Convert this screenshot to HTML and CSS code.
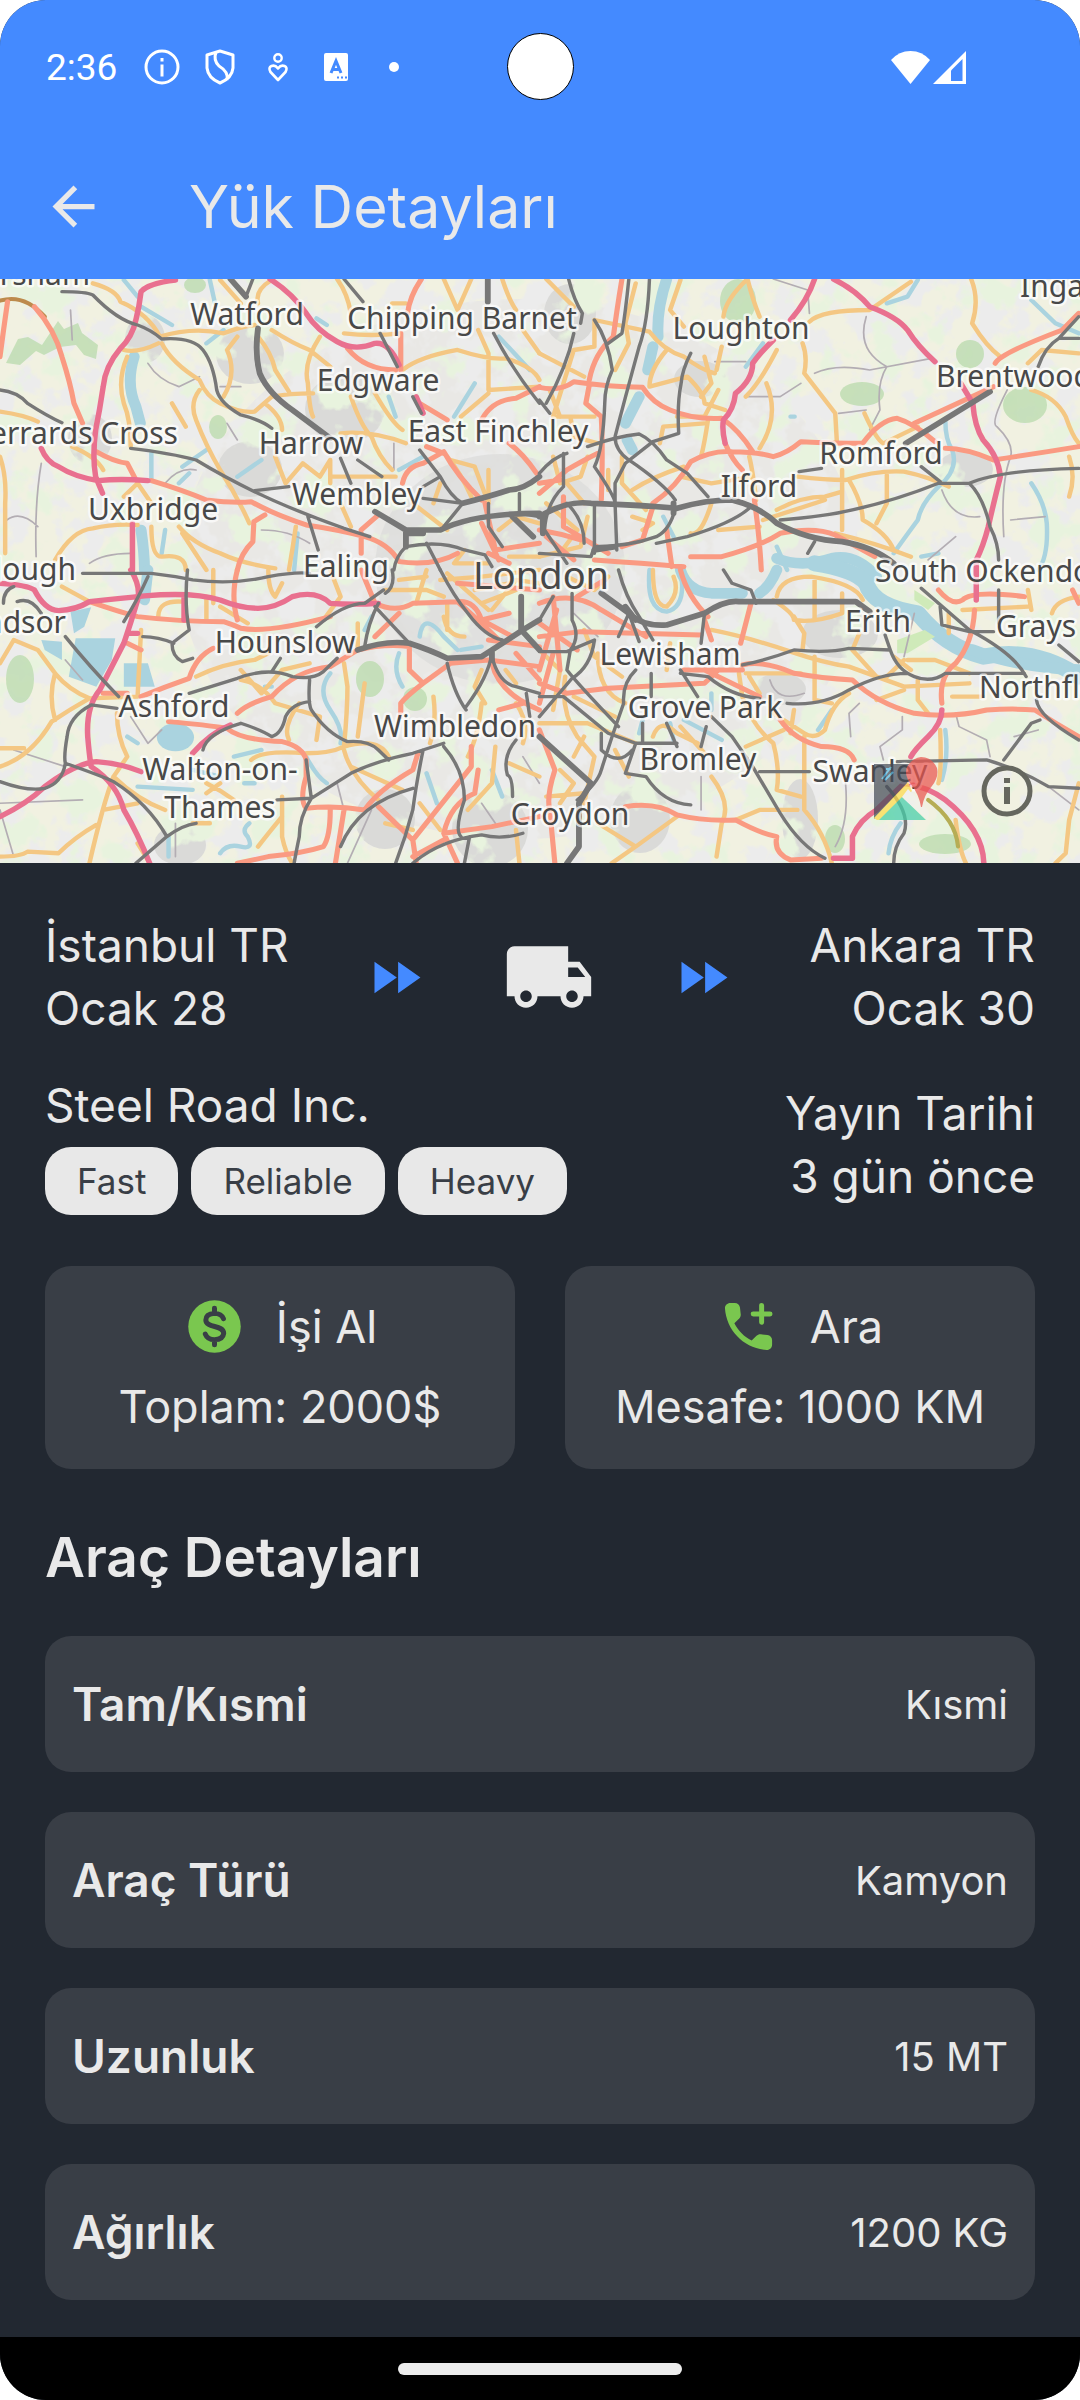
FILE: index.html
```html
<!DOCTYPE html>
<html lang="tr">
<head>
<meta charset="utf-8">
<meta name="viewport" content="width=device-width, initial-scale=1">
<title>Yük Detayları</title>
<link rel="stylesheet" href="styles.css">
</head>
<body>
<div class="phone">
  <header class="top">
    <div class="status">
      <time class="clock">2:36</time>
      <svg class="status-icon" viewBox="0 0 36 36" aria-hidden="true"><circle cx="18" cy="18" r="16" fill="none" stroke="#fff" stroke-width="3"/><path d="M16.500 9h3v3.500h-3zM16.500 15.500h3v12h-3z" fill="#fff"/></svg>
      <svg class="status-icon" viewBox="0 0 36 36" aria-hidden="true"><path d="M18 2 31 6V19Q30 29 18 34Q6 29 5 19V6ZM14 3.500Q11 11 17 17Q27 23 25 31" fill="none" stroke="#fff" stroke-width="3" stroke-linejoin="round"/></svg>
      <svg class="status-icon" viewBox="0 0 36 36" aria-hidden="true"><circle cx="18" cy="9" r="3.700" fill="none" stroke="#fff" stroke-width="2.400"/><path d="M18 31 10.500 23Q8 18.500 11.500 17Q15 15.500 18 19.500Q21 15.500 24.500 17Q28 18.500 25.500 23Z" fill="none" stroke="#fff" stroke-width="2.600" stroke-linejoin="round"/></svg>
      <svg class="status-icon" viewBox="0 0 36 36" aria-hidden="true"><rect x="6" y="4" width="24" height="28" rx="2" fill="#fff"/><path d="M13 24 18 12 23 24M14.500 20.500H21.500" fill="none" stroke="#448aff" stroke-width="3"/><path d="M19 27.500h2v2h-2zM23 27.500h2v2h-2zM27 27.500h2v2h-2z" fill="#448aff"/></svg>
      <svg class="status-icon" viewBox="0 0 36 36" aria-hidden="true"><circle cx="18" cy="18" r="5" fill="#fff"/></svg>
      <span class="camera"></span>
      <svg class="signal" viewBox="0 0 76 34" aria-hidden="true"><path d="M0 10Q8 1 19.500 1T39 10L19.500 34Z" fill="#fff"/><path d="M42 34 75 1V34Z" fill="#fff"/><path d="M60 20.500 71.500 9V31H60Z" fill="#448aff"/></svg>
    </div>
    <div class="appbar">
      <button class="back" type="button" aria-label="Geri"><svg viewBox="0 0 24 24"><path d="M20 11H7.830l5.590-5.590L12 4l-8 8 8 8 1.410-1.410L7.830 13H20v-2z" fill="currentColor"/></svg></button>
      <h1 class="title">Yük Detayları</h1>
    </div>
  </header>

  <div class="map">
    <svg class="map-canvas" viewBox="0 0 1080 584" preserveAspectRatio="xMidYMid slice" role="img" aria-label="Harita">
      <defs>
        <filter id="woods" x="0" y="0" width="1" height="1">
          <feTurbulence type="fractalNoise" baseFrequency=".03" numOctaves="4" seed="8"/>
          <feColorMatrix values="0 0 0 0 .81  0 0 0 0 .9  0 0 0 0 .73  9 0 0 0 -4.900"/>
        </filter>
        <filter id="streets" x="0" y="0" width="1" height="1">
          <feTurbulence type="fractalNoise" baseFrequency=".035" numOctaves="4" seed="21"/>
          <feColorMatrix values="0 0 0 0 .84  0 0 0 0 .84  0 0 0 0 .835  0 9 0 0 -4.200"/>
        </filter>
      </defs>
      <rect width="1080" height="584" fill="#f1f1e1"/>
      <ellipse cx="520" cy="290" rx="340" ry="270" fill="#e9e8e5"/>
      <rect width="1080" height="584" filter="url(#streets)"/>
      <g fill="#dadad8">
        <ellipse cx="500" cy="290" rx="125" ry="115" opacity=".65"/>
        <ellipse cx="145" cy="60" rx="20" ry="24"/><ellipse cx="250" cy="75" rx="34" ry="30"/><ellipse cx="345" cy="130" rx="40" ry="34"/>
        <ellipse cx="250" cy="190" rx="32" ry="28"/><ellipse cx="90" cy="160" rx="22" ry="25"/><ellipse cx="570" cy="35" rx="26" ry="30"/>
        <ellipse cx="965" cy="190" rx="28" ry="18"/><ellipse cx="840" cy="355" rx="38" ry="24"/><ellipse cx="800" cy="540" rx="18" ry="40"/>
        <ellipse cx="180" cy="566" rx="26" ry="20"/><ellipse cx="490" cy="550" rx="38" ry="38"/><ellipse cx="385" cy="540" rx="30" ry="30"/>
        <ellipse cx="780" cy="410" rx="26" ry="16"/><ellipse cx="640" cy="540" rx="30" ry="34"/><ellipse cx="700" cy="100" rx="26" ry="18"/>
      </g>
      <rect width="1080" height="584" filter="url(#woods)"/>
      <g fill="#bddcb0" opacity=".8">
        <ellipse cx="738" cy="22" rx="18" ry="22"/><ellipse cx="1025" cy="126" rx="22" ry="18"/><ellipse cx="862" cy="115" rx="22" ry="12"/>
        <path d="M6 84 18 60 28 58 42 66 58 42 64 50 78 44 82 54 98 66 96 80 84 76 76 66 60 68 44 76 36 72 20 86Z"/>
        <ellipse cx="218" cy="148" rx="9" ry="12"/><ellipse cx="20" cy="400" rx="14" ry="24"/><ellipse cx="415" cy="420" rx="12" ry="12"/><ellipse cx="195" cy="6" rx="11" ry="8"/>
        <ellipse cx="970" cy="75" rx="14" ry="14"/><ellipse cx="835" cy="560" rx="10" ry="14"/><ellipse cx="945" cy="565" rx="26" ry="10"/><ellipse cx="370" cy="400" rx="14" ry="18"/>
      </g>
      <g fill="none" stroke-linecap="round" stroke-linejoin="round" transform="scale(.344 .3333)">
        <g stroke="#aad3df" fill="none">
          <g stroke-width="13">
            <path transform="translate(0 -27)" d="M410 110 500 165M360 30 400 80M610 30 625 100M440 550V630M600 220 650 180M690 620 760 570M530 590 600 540M1320 440 1380 340M1130 380 1150 440M1450 200 1540 300M520 640 550 610M920 145 950 165M1160 600 1230 560M480 780 470 850M865 790 855 900"/>
            <path transform="translate(1568 -27)" d="M650 220 600 290M1010 100 1070 80 1100 30M1430 90 1500 160 1568 190M1180 450Q1180 510 1200 540 1220 600 1160 650 1110 700 1100 750 1050 820 1030 850M1430 640Q1470 700 1475 760 1480 860 1450 900M730 440h12M360 740 390 800M690 830 720 900M1110 860 1160 850"/>
            <path transform="translate(0 873)" d="M960 310Q920 360 960 420 1000 480 990 520M680 560 760 540M640 850Q660 820 700 830 740 840 720 800 700 780 725 760M1160 250Q1140 300 1170 350M1220 200Q1230 120 1290 200L1330 240M890 560Q920 620 950 640M1430 600 1460 680M1240 610 1270 700M490 800V860M560 600 640 620M370 500 400 520M710 640 740 640M1340 240 1400 230M1060 180 1080 140M770 350 790 350M400 650 560 660"/>
            <path transform="translate(1568 873)" d="M810 480 850 420M420 450 530 510M1050 760Q1020 800 1015 850M290 490 300 450M390 510 380 460M1180 480Q1190 560 1170 630M500 370V420M320 0Q310 120 370 125 430 110 410 0"/>
          </g>
          <g stroke-width="32">
            <path transform="translate(0 -27)" d="M390 260Q365 340 395 410L408 460M410 780Q420 850 420 900"/>
            <path transform="translate(1568 -27)" d="M370 27Q340 120 345 200M330 230 315 300M290 380 250 460M255 510 270 540M690 865Q760 895 850 865 920 850 980 920"/>
            <path transform="translate(0 873)" d="M430 0 420 90"/>
            <path transform="translate(1568 873)" d="M410 0Q430 65 500 70H590M690 0Q670 50 640 70"/>
          </g>
          <path transform="translate(1568 873)" stroke-width="48" d="M800-20Q920 0 950 40 970 110 1100 130 1180 230 1290 260 1440 230 1568 320"/>
          <path transform="translate(1568 873)" stroke-width="34" d="M1260 240Q1380 290 1568 300"/>
        </g>
        <g transform="translate(0 873)" fill="#aad3df"><ellipse cx="510" cy="502" rx="54" ry="42"/><path d="M205 125 265 112 245 170 215 190ZM220 205H335L325 270 280 350 200 320ZM360 280H430L450 350H360ZM120 210 180 215 180 270 130 240Z"/></g>
        <g fill="#cfeab9" transform="translate(1568 873)"><path d="M1090 60 1150 100 1130 120 1090 90ZM1040 210 1120 180 1150 200 1070 250 1040 250Z"/></g>

        <g stroke="#b3adb3" stroke-width="5">
          <path transform="translate(0 -27)" d="M205 120 210 210M660 460 690 510M120 580Q100 700 105 860M20 750Q60 720 110 770M260 880Q300 850 380 850M430 280Q460 330 520 350L580 320M640 350 700 350M480 640Q520 590 570 600M1145 520V600M760 780Q840 780 900 820"/>
          <path transform="translate(1568 -27)" d="M950 140Q920 240 1010 290 980 340 990 420L960 480M870 430 950 420M1360 360Q1310 460 1330 470 1380 520 1370 560 1340 640 1350 800M800 310Q860 280 960 300L1140 265M600 380H700L760 340M1170 660Q1200 750 1280 740M1370 750 1470 740M680 27 780 60 785 130M510 275H600M1130 870 1210 800"/>
          <path transform="translate(0 873)" d="M40 540 190 590M0 700 240 690M190 270 240 330M380 440 430 520 470 480M0 720 40 860M510 760V860M1520 560 1568 640M1080 720 1010 880M1400 700 1440 760M980 640 1000 720"/>
          <path transform="translate(1568 873)" d="M1055 440V480L990 530 1000 570M1210 430 1220 470 1300 510 1310 560M890 640Q900 760 860 830M930 400 900 430 905 500M1380 500 1450 480M1480 650 1568 720M670 330Q690 400 770 370M470 620V720M100 130 170 200M1090 130 1060 260"/>
        </g>

        <g stroke="#f4c783" stroke-width="13">
          <path transform="translate(0 -27)" d="M270 40Q340 60 350 95 430 130 465 200 560 170 650 190 700 170 740 165M0 425Q70 435 110 455M0 560Q20 620 15 700V850M360 240Q400 250 460 220M370 260Q340 330 360 400 380 450 380 530M470 220Q500 280 580 330 600 380 640 400 700 430 740 425L790 380Q840 370 910 370M690 200 660 240Q690 310 650 380M580 360Q550 400 570 450 600 530 640 600 690 680 725 760M750 200Q790 250 800 300L840 365M790 180Q850 220 900 240L960 290M930 200Q880 280 895 340 900 420 910 440M770 400Q820 440 820 480M1020 380Q1050 470 1080 500 1100 560 1140 600M1090 370Q1140 460 1170 480M1000 190Q1080 200 1165 190M1170 300Q1220 260 1330 240 1420 270 1470 265 1550 290 1568 330M1390 180 1420 250V360L1568 350M1420 370 1340 440M990 490Q1080 480 1180 520M640 30 700 100M980 27Q1010 70 1020 130M1290 27 1330 120 1370 27M1460 27Q1480 90 1500 120M1520 180 1568 250M800 560 830 640 880 580 930 620 960 570V640M960 620H1150M1310 570 1380 590 1420 700M160 870Q210 780 270 775 330 760 400 765M440 770Q440 860 470 860 540 850 540 900M520 770Q560 820 640 850 700 880 800 895M530 790 600 900M860 770Q850 840 840 900M990 700 1020 770M1200 700 1300 780M750 100Q740 60 790 30M210 530Q280 560 300 600M360 680 400 640 440 700M540 470 500 400M1140 100H1180M1280 640 1260 700M1300 560Q1340 610 1370 680M1450 780 1500 740 1568 760M1420 600V700M1350 840 1320 880 1420 880M1480 860 1568 860"/>
          <path transform="translate(1568 -27)" d="M20 27Q80 90 100 110M0 250 130 320M160 150V230L100 240 40 440H160M160 150 320 185Q360 240 420 260 470 300 510 310M370 240Q320 300 320 350L430 320Q480 370 480 400L540 420M410 30 380 120 420 170M535 140Q540 90 605 27 620 90 640 140M785 155Q820 120 960 120L1080 35M515 300 530 230M690 240Q640 340 600 380M765 220Q780 260 770 310 800 350 860 430L865 520M660 340Q700 440 640 535M1255 27Q1280 90 1258 160 1300 230 1340 260M1420 280 1460 240 1568 250M1430 360Q1500 380 1530 440 1550 500 1568 520M945 430Q980 510 1000 520L1100 470M610 560Q620 600 630 690M750 620Q830 630 890 630 980 600 1060 605 1130 620 1190 650M880 600V780M900 630Q940 700 940 750 1010 790 1030 840M690 720Q760 680 830 680L880 665M650 750 830 690M1010 615V700L980 760M860 790Q980 820 1080 860M270 660Q330 620 420 590M490 450Q480 520 470 560M350 520 360 470 480 460M500 700Q470 800 440 790M520 780 640 770M280 40 250 160 260 220 220 300M400 440 480 440 520 360M30 360 60 440M40 560 60 640 120 620 140 560M240 560V640L310 720M270 740 330 760 300 780M1540 560Q1560 620 1540 680M410 620 500 640 620 620M480 260 500 340 470 380M0 860 120 830 140 740M20 700 110 780 60 850M200 600V660M90 440 100 500 170 520M80 640 130 700"/>
          <path transform="translate(0 873)" d="M0 280 40 210 110 240 160 310Q200 360 260 385L400 380 410 180M260 385Q200 420 150 455 90 560 0 590M160 310Q140 380 160 450M0 535H70M340 430Q340 500 370 560L330 620Q300 700 260 880M300 720 400 700M0 860Q60 860 80 845L170 850Q220 800 280 765M330 620Q400 690 480 720M180 50 260 95M460 140Q460 90 530 95M600 80V150M620 100V0M640 110 720 160M780 0Q780 60 800 80L820 40M570 320Q650 280 740 270L780 250M700 300 760 370 820 300 900 280M700 330Q760 340 800 400L930 440 920 510M870 400Q820 470 840 510M730 570Q760 540 890 550 960 550 1000 530 1010 420 1010 350L1000 280M1000 530Q1100 500 1130 560M1020 590 1170 660M1000 540Q1020 620 1100 690M820 680V800Q830 850 850 880M820 740Q780 790 750 830M600 640Q640 660 680 690M600 670 640 640M560 760H610M940 150 990 80 960 0M1040 160V240M1210 100 1240 0M1290 140Q1300 200 1350 200M1280 30 1400 20 1568 0M1400 400Q1390 500 1360 560M1480 580 1568 620M1440 530 1430 640 1360 720M1220 700 1280 780M1500 780 1510 880M400 820 430 870M1400 100 1500 60M1380 60 1480 40M1300 10 1420 120M1260 380Q1270 460 1250 520M1120 60 1240 60 1290 80M1430 120 1500 30 1568 40M1300 100V180M1160 30 1240 20M1500 400Q1540 460 1520 520M1400 300 1380 350 1410 400M1060 340 1040 500M1120 760 1200 780M1470 300 1500 340"/>
          <path transform="translate(1568 873)" d="M690 80Q700 20 790 20 920 40 940 90M680 90Q740 130 740 150 800 160 880 130L880 70M800 30V150M500 180Q600 200 730 245 830 280 900 290L980 320 1060 350 1250 340M740 140 770 190 765 240M330 0Q330 110 370 110 410 70 390 20M1070 270H1150L1250 310M930 190 910 240 980 320M1100 330V390L1130 430M1165 480Q1170 600 1160 640M900 370Q850 400 830 480 800 510 770 490L680 430M580 310 590 380Q620 470 680 520 700 600 690 660L760 680M600 530 710 480M770 500V720Q830 790 850 880M500 620Q560 700 530 760L515 860M570 750 640 720H750M400 740 280 830 170 760M280 830 210 880M0 460 140 460 280 520M75 320Q60 420 110 500L160 560 130 700M330 500Q350 440 400 490L460 520M410 470 480 550M170 250Q170 370 250 400M1500 880 1530 850 1540 750 1568 640M1420 60 1430 120M1490 130Q1500 90 1568 80M1230 120 1420 110M1200 380H1290M1210 750Q1220 840 1240 880M1030 260 1080 300M800 260V390L850 400M600 310H760M610 320 640 370M980 390 1060 360M130 180 160 260 240 320M380 220 370 300M60 600 100 640 60 700M130 500 100 560M20 680 130 670M220 540 260 620M0 240 60 300 40 420M100 380 220 440M80 20 160 60 200 20M1060 270 1010 320M1190 130 1190 190M740 420 730 490"/>
        </g>
        <path transform="translate(1568 873)" stroke="#b6ad55" stroke-width="12" d="M1130 690Q1210 750 1217 830"/>
        <path transform="translate(0 -27)" stroke="#bd8a4c" stroke-width="12" d="M0 92Q70 70 130 140"/>

        <g stroke="#fa9a82" stroke-width="15">
          <path transform="translate(0 -27)" d="M22 95Q10 180 0 260M100 110Q160 180 180 260 205 340 215 400L240 460M280 545Q330 575 370 580L395 630M440 632Q530 660 600 690 680 700 730 695 790 730 890 765 990 780 1060 800 1130 820 1160 875 1260 890 1330 850M690 900Q700 850 735 815L738 755 770 735M1165 190V300M1185 130Q1190 80 1225 27M1010 235Q1060 300 1150 300M1220 400 1300 450M1400 450Q1430 390 1500 385L1568 350M1170 640Q1180 590 1230 580L1290 545Q1330 620 1400 690M1050 780 1100 735M1240 530 1290 550M1480 520Q1520 550 1560 610M1410 700 1440 840 1568 820M1050 790V850M1420 850 1480 880M1400 760 1450 870"/>
          <path transform="translate(1568 -27)" d="M240 27Q225 120 215 200 160 250 145 330M0 352Q60 365 100 335 200 350 300 352 330 400 380 420 450 450 530 445 580 480 620 545M145 345 135 400 180 440Q185 540 180 690M330 700Q400 650 440 575 500 540 560 545 630 545 680 560 720 550 760 515 860 520 940 520 990 450 1040 445 1090 460 1150 515M1180 535Q1240 535 1320 570 1450 550 1568 530M1090 460 1320 350M1325 280Q1340 250 1520 180L1568 130M540 520Q560 570 590 600M625 690Q640 800 645 900M440 860H530Q640 830 700 790 800 770 860 795L975 860M0 670 80 600Q130 570 170 550M70 680V770L200 850M0 780Q60 790 120 810M160 870Q300 880 420 890M370 780 385 890M240 830 300 810 330 710M0 640 60 630M20 800 100 870"/>
          <path transform="translate(0 873)" d="M260 95Q360 130 400 140 520 155 650 155 680 165 700 175 780 190 960 140M690 0Q670 80 690 150M370 220 410 240M410 380Q480 350 550 325 570 260 620 235M300 370H370M490 455Q600 465 660 475 700 510 820 515 880 530 890 570V620Q870 690 890 715 970 705 1060 720 1100 660 1200 600L1215 550M690 430Q720 400 790 380 860 300 960 290L1040 240Q1120 220 1190 230V300L1230 340Q1180 380 1165 400V440M1230 340 1310 280 1420 270 1568 290M1050 0 1090 100Q1150 130 1200 100L1330 95Q1380 90 1400 150L1480 130M960 720Q960 800 940 830 880 850 780 860L690 880M1000 720 975 880M1100 710 1200 810 1210 880M1200 810 1370 590V530M1390 600 1380 670Q1310 700 1290 790L1330 880M1290 790 1430 770 1568 740M1430 280Q1450 370 1568 420M1090 200 1160 130M1200 860 1290 810M1330 95Q1400 160 1450 210M1330 40 1568 60M1500 250 1568 330M1520 400 1450 420M1420 210 1568 230M1400 150 1490 200"/>
          <path transform="translate(1568 873)" d="M1160 60Q1200 110 1230 90 1260 60 1410 80M1265 120Q1260 220 1210 280 1160 320 1170 400M1568 100 1550 60M480 150 500 210M615 100 585 220M410 0Q430 80 490 140M590 285Q650 270 740 310 820 325 910 330 980 400 1090 430 1200 445 1300 420 1380 415 1440 420 1500 460 1568 500M700 450Q740 510 820 530 900 530 915 570M250 710Q340 695 400 735 480 755 570 750 640 790 690 800 680 850 730 870L820 865M0 340 80 370 200 355 480 340 520 300M0 480 45 600Q20 680 30 720L45 880M0 200 120 185 470 195M0 100Q100 60 180 120L310 200M40 80 60 300M0 300 50 120M110 80 190 30M420 300H590M480 300 640 380M0 160 110 240M0 400 40 250"/>
        </g>

        <g stroke="#e9708f" stroke-width="16">
          <path transform="translate(0 -27)" d="M510 30Q430 40 410 65 405 110 395 150 385 200 350 235 305 290 300 350 290 420 278 480 268 560 278 620L298 670M385 760V900M120 535Q135 575 170 590 215 620 285 632 350 625 430 632M785 27Q850 70 890 130 920 180 980 215 1030 245 1090 220 1130 215 1160 285M1210 380 1230 430"/>
          <path transform="translate(1568 -27)" d="M800 27Q780 90 730 150M680 210Q640 250 620 280 620 330 570 370 565 420 535 450 530 480 540 520M855 27Q920 60 960 110 1040 140 1070 180 1100 230 1150 275M1225 340 1260 400Q1265 470 1290 510 1335 560 1340 620 1320 700 1305 770 1290 830 1270 870V990"/>
          <path transform="translate(0 873)" d="M0 40Q80 45 100 60 130 120 170 122 220 120 260 95 360 85 420 78 560 65 640 90 700 115 750 115 800 115 850 80 920 60 960 100 1030 105 1100 100M380 0Q410 50 400 90 380 160 360 220 320 300 290 360 250 410 255 500 260 560 265 590 340 640 360 720 400 790 435 880M0 740Q80 700 130 650 220 580 280 575 350 580 410 605M535 80V150M560 550Q610 490 670 465M370 190H400"/>
          <path transform="translate(1568 873)" d="M1170 420Q1170 460 1130 500 1090 540 1080 560M855 865H910V800Q930 750 980 720L1060 640Q1130 650 1180 690 1290 780 1292 880"/>
        </g>

        <g stroke="#777" stroke-width="10">
          <path transform="translate(0 -27)" d="M180 65Q250 65 270 75 340 150 400 165 440 180 470 207 560 200 590 240 620 280 630 360 640 400 700 435 760 450 790 475M0 360Q50 365 80 400 140 440 180 458M380 535Q500 550 570 570 650 620 740 665 850 720 1000 775L1075 800M740 662 840 650M735 27 715 80M1000 27 1055 95M1105 190 1155 290M1200 380 1225 430M1435 190Q1490 300 1568 400M990 565 1020 640M1040 570 1110 620M1220 540 1280 620Q1310 680 1345 700M1280 620 1230 650M1230 685 1345 700 1290 770M1180 830Q1150 860 1145 900M1180 830Q1280 810 1350 840L1410 855 1430 890M1420 700V770L1460 830M1240 820 1280 900M895 740 925 840M1510 670V730L1568 740"/>
          <path transform="translate(1568 -27)" d="M85 27Q100 90 125 130L120 160M100 190Q80 290 20 400M260 27Q250 130 240 190L200 220M320 27Q315 160 290 230 250 380 220 500 220 540 260 570 360 640 395 690M160 150Q200 210 212 300 190 350 190 400 185 540 160 590 220 680 220 700L225 840M440 250Q415 300 412 340 400 400 405 490L330 515M140 530Q220 500 290 492 330 510 370 570L430 610 490 680M330 515 250 580 220 640V700M0 390 30 430M0 610Q40 560 80 550M70 550V650Q20 700 15 780L80 880M700 750Q830 740 910 720 1040 690 1160 640L1250 640Q1340 600 1568 595M1110 590 1165 635M755 605 820 595M1250 640Q1290 680 1310 770 1335 820 1335 870M1450 290Q1470 230 1510 205H1568M1510 205 1568 140M395 715Q380 780 340 800 260 830 160 830L150 860 0 850M340 820 430 800Q560 760 610 715M160 700V850M80 700Q130 750 130 820M800 815 780 850"/>
          <path transform="translate(0 873)" d="M240 10H440Q520 20 560 30 680 45 780 20 860 5 900 10M50 95Q90 80 120 130M10 100Q10 60 40 50M190 200Q260 290 345 380M340 415 265 405Q200 440 195 500 185 560 190 580 180 640 130 655 80 665 0 635M190 580Q300 620 330 635 430 700 485 800L395 880M485 800Q530 765 570 760M545 0Q535 100 550 180L500 220Q500 260 530 275L560 265M415 200Q460 200 505 220M430 20Q400 90 360 155M550 370 690 325Q780 290 850 320 910 330 940 305L980 265M790 305 815 265M900 330Q895 400 905 420 950 490 1010 515 1070 510 1100 540L1130 570M590 540Q600 490 700 460 760 480 790 500 820 490 830 440 850 400 900 395M805 690 905 685 1020 610Q1100 570 1200 550L1290 520M905 685 890 570M905 685Q870 740 870 800 860 850 855 880M920 170Q1000 100 1060 100L1115 60M1060 230Q1070 160 1100 100M1090 110 1190 220M1280 0Q1320 80 1360 130 1410 200 1460 210M1430 250Q1420 320 1355 410M1300 280Q1320 370 1355 420M1430 260Q1450 340 1500 350L1568 370M1530 370 1540 440M1230 540Q1210 640 1200 720 1180 800 1150 880M990 830Q1040 700 1200 655M1290 530Q1350 600 1350 690 1320 780 1340 800M1200 880Q1280 810 1400 795 1460 810 1520 790M1500 510Q1460 560 1475 615 1490 620 1490 680M1365 800 1350 880M1140 0Q1150 50 1120 70"/>
          <path transform="translate(1568 873)" d="M40 80 0 150M95 70V150Q120 200 90 240L80 300Q110 340 230 470M230 0Q250 80 290 140L330 210M260 130 290 215M260 130 230 200M480 130 470 220M535 0 560 40 615 60 630 100M0 245H80L160 210Q150 290 95 325L0 440M280 300Q240 340 245 400 210 500 180 600 170 640 110 690M325 310V380M410 300 460 380M410 310 490 320Q560 380 640 385M590 285Q660 270 740 240 840 250 900 235L1020 240Q1040 300 1090 320 1140 340 1180 310H1410M1020 240 1005 195M720 400Q820 410 900 360 990 310 1070 310M500 440 560 500 620 590 700 730Q760 830 830 865M640 605H785M1110 55 1250 180Q1380 250 1415 320M1165 110 1170 165 1250 185H1320M1510 225 1568 275M1445 390Q1450 440 1568 510M1455 450 1430 460 1350 570M1040 575 1300 570Q1400 600 1480 650L1568 655M0 380H70L200 490 280 520H400M280 520 250 610 310 620Q360 700 440 705M370 460 400 530M300 460V520M485 470 470 530M180 490V540Q230 590 270 540M1010 650Q1080 730 1060 790 1030 830 1030 880M1335 60V160"/>
        </g>
        <g stroke="#777" stroke-width="17">
          <path transform="translate(0 -27)" d="M670 27 715 80M750 175Q740 250 755 310 780 370 850 420L960 505M1418 27V95M1345 700Q1420 680 1480 660 1520 660 1568 620M1090 725 1180 780H1280Q1380 730 1568 730M1180 780V830M1490 740 1550 800M1180 790H1230"/>
          <path transform="translate(1568 -27)" d="M0 740Q80 690 150 700 300 705 400 715 480 690 560 690 640 710 690 760 780 810 880 815 970 830 1030 880M1065 520 1310 365M160 840 220 830M10 740V790M390 700V730"/>
          <path transform="translate(0 873)" d="M1040 240Q1120 210 1190 220 1250 240 1300 265L1400 260 1520 180 1568 150M1515 80V180L1568 240M1430 270V240"/>
          <path transform="translate(1568 873)" d="M180 70 260 130Q300 170 370 165L480 130Q540 90 580 95L920 95 960 125M250 110 280 150M0 500 150 640 115 700V830L80 880"/>
        </g>
      </g>
      <g class="map-labels">
        <text x="90" y="6" text-anchor="end">Amersham</text><text x="247" y="46">Watford</text><text x="462" y="50">Chipping Barnet</text>
        <text x="741" y="60">Loughton</text><text x="1020" y="18" text-anchor="start">Ingatestone</text><text x="378" y="112">Edgware</text>
        <text x="936" y="108" text-anchor="start">Brentwood</text><text x="178" y="165" text-anchor="end">Gerrards Cross</text><text x="311" y="175">Harrow</text>
        <text x="498" y="163">East Finchley</text><text x="881" y="185">Romford</text><text x="357" y="226">Wembley</text><text x="759" y="218">Ilford</text>
        <text x="153" y="241">Uxbridge</text><text x="76" y="301" text-anchor="end">Slough</text><text x="346" y="298">Ealing</text>
        <text class="city" x="541" y="310">London</text><text x="875" y="303" text-anchor="start">South Ockendon</text><text x="66" y="354" text-anchor="end">Windsor</text>
        <text x="285" y="374">Hounslow</text><text x="878" y="353">Erith</text><text x="1036" y="358">Grays</text><text x="670" y="386">Lewisham</text>
        <text x="979" y="419" text-anchor="start">Northfleet</text><text x="174" y="438">Ashford</text><text x="455" y="458">Wimbledon</text>
        <text x="705" y="439">Grove Park</text><text x="698" y="491">Bromley</text><text x="870" y="503">Swanley</text><text x="220" y="501">Walton-on-</text>
        <text x="220" y="539">Thames</text><text x="570" y="546">Croydon</text>
      </g>
    </svg>
    <svg class="map-logo" viewBox="0 0 64 64" aria-hidden="true">
      <g opacity=".72"><path d="M0 7H36L33 28 0 62Z" fill="#454c58"/><path d="M8 22 17 10M11 23 19 15M12 12H17" stroke="#55b9e0" stroke-width="2"/><path d="M0 61 34 25 38 34 8 63H3Z" fill="#ffdc4a"/><path d="M28 40 52 63H5Z" fill="#45cfa8"/><path d="M34 32 55 55 54 63 28 40Z" fill="#f1f1ec"/><path d="M47 50Q45 37 36 26Q30 17 33 10Q38 1 47 0Q58 0 63 11Q65 20 58 29Q50 38 48 50Z" fill="#e9564f"/></g>
    </svg>
    <button class="map-info" type="button" aria-label="Harita bilgisi"><svg viewBox="0 0 52 52"><circle cx="26" cy="26" r="23" fill="none" stroke="#66675f" stroke-width="5"/><path d="M23 13h6v5h-6zM23 22h6v17h-6z" fill="#66675f"/></svg></button>
  </div>

  <main class="content">
    <section class="route">
      <p>İstanbul TR<br>Ocak 28</p>
      <svg class="forward" viewBox="0 0 24 24" aria-hidden="true"><path d="M4 18l8.500-6L4 6v12zm9-12v12l8.500-6L13 6z" fill="#448aff"/></svg>
      <svg class="truck" viewBox="0 0 24 24" aria-hidden="true"><path d="M20 8h-3V4H3c-1.100 0-2 .9-2 2v11h2c0 1.660 1.340 3 3 3s3-1.340 3-3h6c0 1.660 1.340 3 3 3s3-1.340 3-3h2v-5l-3-4zM6 18.500c-.83 0-1.500-.67-1.500-1.500s.67-1.500 1.500-1.500 1.500.67 1.500 1.500-.67 1.500-1.500 1.500zm13.500-9l1.960 2.500H17V9.500h2.500zm-1.500 9c-.83 0-1.500-.67-1.500-1.500s.67-1.500 1.500-1.500 1.500.67 1.500 1.500-.67 1.500-1.500 1.500z" fill="currentColor"/></svg>
      <svg class="forward" viewBox="0 0 24 24" aria-hidden="true"><path d="M4 18l8.500-6L4 6v12zm9-12v12l8.500-6L13 6z" fill="#448aff"/></svg>
      <p class="end">Ankara TR<br>Ocak 30</p>
    </section>

    <section class="company">
      <div>
        <p>Steel Road Inc.</p>
        <ul class="chips"><li>Fast</li><li>Reliable</li><li>Heavy</li></ul>
      </div>
      <p class="end">Yayın Tarihi<br>3 gün önce</p>
    </section>

    <section class="actions">
      <button class="action" type="button">
        <span class="action-head"><svg viewBox="0 0 24 24" aria-hidden="true"><circle cx="12" cy="12" r="10" fill="#7ac74f"/><path d="M12 5V7M12 17V19M15.400 9Q14.600 7 12 7Q8.700 7.200 8.700 9.500C8.700 12.800 15.500 11.200 15.500 14.600Q15.200 17 12 17Q9.300 17 8.500 14.900" fill="none" stroke="#393e46" stroke-width="1.900" stroke-linecap="round"/></svg>İşi Al</span>
        <span>Toplam: 2000$</span>
      </button>
      <button class="action" type="button">
        <span class="action-head"><svg viewBox="0 0 24 24" aria-hidden="true"><path d="M19.230 15.260l-2.540-.29c-.61-.07-1.210.14-1.640.57l-1.840 1.840c-2.830-1.440-5.150-3.750-6.590-6.590l1.850-1.850c.43-.43.64-1.030.57-1.640l-.29-2.520c-.12-1.010-.97-1.770-1.990-1.770H5.030c-1.130 0-2.070.94-2 2.070.53 8.540 7.360 15.360 15.890 15.890 1.130.07 2.070-.87 2.070-2v-1.730c.01-1.010-.75-1.860-1.760-1.980z" fill="#7ac74f"/><path d="M17 4V10.400M13.800 7.200H20.200" stroke="#7ac74f" stroke-width="1.900" stroke-linecap="round"/></svg>Ara</span>
        <span>Mesafe: 1000 KM</span>
      </button>
    </section>

    <h2 class="heading">Araç Detayları</h2>
    <dl class="details">
      <div class="detail"><dt>Tam/Kısmi</dt><dd>Kısmi</dd></div>
      <div class="detail"><dt>Araç Türü</dt><dd>Kamyon</dd></div>
      <div class="detail"><dt>Uzunluk</dt><dd>15 MT</dd></div>
      <div class="detail"><dt>Ağırlık</dt><dd>1200 KG</dd></div>
    </dl>
  </main>
  <div class="navbar"><span class="handle"></span></div>
</div>
</body>
</html>
```

FILE: styles.css
```css
* { box-sizing: border-box; }

body {
  margin: 0;
  background: #fff;
  color: #e9e9e9;
  font-family: Inter, "Open Sans", sans-serif;
  font-size: 46px;
  line-height: 63px;
}

h1, h2, p, ul, dl, dd { margin: 0; padding: 0; }

button {
  border: 0;
  padding: 0;
  background: none;
  color: inherit;
  font: inherit;
  cursor: pointer;
}

svg { display: block; }

.phone {
  display: flex;
  flex-direction: column;
  min-height: 100vh;
  overflow: hidden;
  border-radius: 46px;
  background: #222831;
}

.top { background: #448aff; }

.status {
  position: relative;
  display: flex;
  align-items: center;
  gap: 22px;
  height: 134px;
  padding: 0 113px 0 46px;
}

.clock {
  width: 76px;
  color: #fff;
  font-family: Roboto, sans-serif;
  font-size: 37px;
}

.status-icon { width: 36px; height: 36px; }

.camera {
  position: absolute;
  top: 33px;
  left: 50%;
  width: 67px;
  height: 67px;
  margin-left: -33px;
  border: 1px solid #000;
  border-radius: 50%;
  background: #fff;
}

.signal { width: 76px; height: 34px; margin-left: auto; }

.appbar {
  display: flex;
  align-items: center;
  gap: 84px;
  height: 145px;
  padding: 0 42px;
}

.back, .back svg { width: 63px; height: 63px; }

.title { font-size: 59px; font-weight: 400; line-height: 80px; }

.map { position: relative; height: 584px; overflow: hidden; }

.map-canvas { width: 100%; height: 100%; }

.map-labels {
  fill: #484848;
  stroke: #fff;
  stroke-width: 5px;
  stroke-opacity: .7;
  stroke-linejoin: round;
  paint-order: stroke;
  text-anchor: middle;
  font-family: "Noto Sans", sans-serif;
  font-size: 30px;
}

.map-labels .city { font-size: 38px; }

.map-logo {
  position: absolute;
  right: 142px;
  bottom: 42px;
  width: 64px;
  height: 64px;
}

.map-info, .map-info svg { width: 52px; height: 52px; }

.map-info { position: absolute; right: 47px; bottom: 46px; }

.content { flex: 1; padding: 51px 45px 36px; }

.route, .company {
  display: flex;
  align-items: center;
  justify-content: space-between;
}

.forward { width: 63px; height: 63px; }

.truck { width: 92px; height: 92px; }

.end { text-align: right; }

.company { margin-top: 34px; }

.chips {
  display: flex;
  gap: 13px;
  margin-top: 10px;
  list-style: none;
}

.chips li {
  padding: 0 32px;
  border-radius: 26px;
  background: #e8e8e8;
  color: #393e46;
  font-size: 35px;
  line-height: 68px;
}

.actions {
  display: grid;
  grid-template-columns: 1fr 1fr;
  gap: 50px;
  margin-top: 51px;
}

.action {
  display: flex;
  flex-direction: column;
  align-items: center;
  gap: 17px;
  padding: 29px 20px 31px;
  border-radius: 26px;
  background: #393e46;
  font-size: 45px;
}

.action-head { display: flex; align-items: center; gap: 30px; }

.action-head svg { width: 63px; height: 63px; }

.heading { margin-top: 49px; font-size: 55px; font-weight: 600; line-height: 78px; }

.details { display: grid; gap: 40px; margin-top: 40px; }

.detail {
  display: flex;
  align-items: center;
  justify-content: space-between;
  height: 136px;
  padding: 0 27px;
  border-radius: 26px;
  background: #393e46;
}

.detail dt { font-size: 46px; font-weight: 600; }

.detail dd { font-size: 40px; }

.navbar {
  display: flex;
  align-items: center;
  justify-content: center;
  height: 63px;
  background: #000;
}

.handle { width: 284px; height: 12px; border-radius: 6px; background: #ececec; }
```
